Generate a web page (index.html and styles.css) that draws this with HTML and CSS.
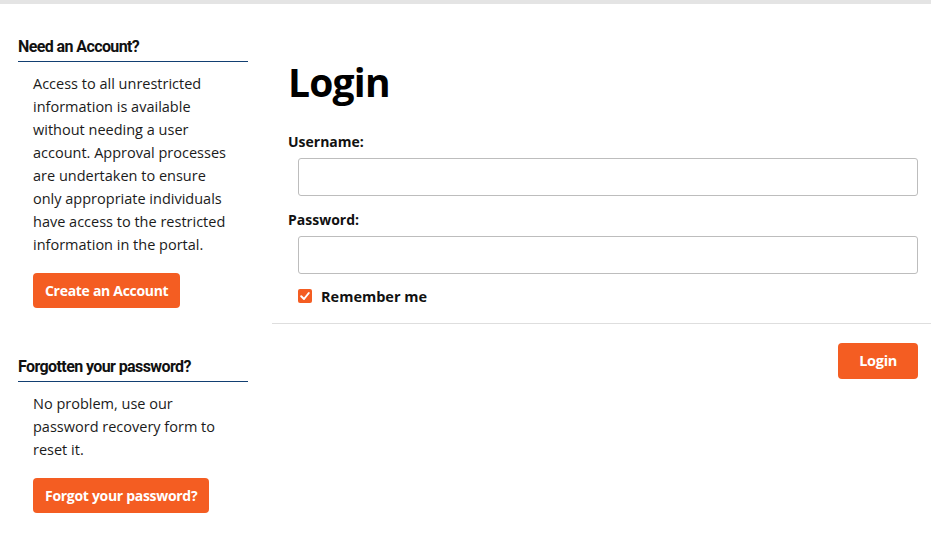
FILE: index.html
```html
<!DOCTYPE html>
<html lang="en">
<head>
<meta charset="utf-8">
<title>Login</title>
<link rel="stylesheet" href="styles.css">
</head>
<body>
<div class="topbar"></div>
<div class="page">
  <aside class="sidebar">
    <section class="panel">
      <h2 class="panel-title">Need an Account?</h2>
      <p class="panel-text">Access to all unrestricted information is available without needing a user account. Approval processes are undertaken to ensure only appropriate individuals have access to the restricted information in the portal.</p>
      <a class="btn btn-side" href="#">Create an Account</a>
    </section>
    <section class="panel">
      <h2 class="panel-title">Forgotten your password?</h2>
      <p class="panel-text">No problem, use our password recovery form to reset it.</p>
      <a class="btn btn-side" href="#">Forgot your password?</a>
    </section>
  </aside>
  <main class="main">
    <form class="login-form">
      <div class="form-body">
        <h1 class="title">Login</h1>
        <label class="field-label" for="username">Username:</label>
        <input class="field-input" id="username" type="text">
        <label class="field-label" for="password">Password:</label>
        <input class="field-input" id="password" type="password">
        <label class="remember">
          <span class="check"><svg viewBox="0 0 14 14" width="14" height="14"><path d="M3.2 7.2 L6 10 L10.8 4" fill="none" stroke="#fff" stroke-width="2" stroke-linecap="round" stroke-linejoin="round"/></svg></span>
          Remember me
        </label>
      </div>
      <div class="form-footer">
        <button class="btn btn-login" type="button">Login</button>
      </div>
    </form>
  </main>
</div>
</body>
</html>
```
FILE: styles.css
```css
* { box-sizing: border-box; }
html, body { margin: 0; padding: 0; background: #fff; }
body {
  font-family: "Open Sans", "Noto Sans", sans-serif;
  color: #1b1b1b;
  font-size: 14px;
}
.topbar {
  height: 4px;
  background: #e4e4e4;
}
.page {
  display: flex;
  padding-left: 18px;
}
.sidebar {
  width: 230px;
  flex: none;
  padding-top: 33px;
}
.panel { margin-bottom: 49px; }
.panel:last-child { margin-bottom: 0; }
.panel-title {
  margin: 0;
  font-family: "Roboto", sans-serif;
  font-weight: 700;
  font-size: 16px;
  letter-spacing: -0.6px;
  color: #111;
  line-height: 20px;
  padding-bottom: 4px;
  border-bottom: 1px solid #123f72;
}
.panel-text {
  margin: 10px 0 17px 15px;
  width: 200px;
  font-size: 14.5px;
  line-height: 23px;
}
.btn {
  display: inline-block;
  background: #f45d22;
  color: #fff;
  font-family: "Open Sans", sans-serif;
  font-weight: 700;
  font-size: 14px;
  letter-spacing: -0.3px;
  text-decoration: none;
  border: none;
  border-radius: 4px;
  height: 35px;
  line-height: 35px;
  padding: 0 12px;
}
.btn-side { margin-left: 15px; }
.main {
  flex: 1;
  margin-left: 24px;
}
.form-body {
  padding: 56px 13px 17px 16px;
  border-bottom: 1px solid #dedede;
}
.title {
  margin: 0 0 29px;
  font-family: "Open Sans", sans-serif;
  font-size: 39px;
  font-weight: 700;
  line-height: 44px;
  color: #000;
  letter-spacing: -0.8px;
}
.field-label {
  display: block;
  font-weight: 700;
  font-size: 14px;
  line-height: 18px;
  color: #111;
  margin-bottom: 7px;
}
.field-input {
  display: block;
  width: calc(100% - 10px);
  margin-left: 10px;
  height: 38px;
  border: 1px solid #bdbdbd;
  border-radius: 3px;
  margin-bottom: 15px;
  font: inherit;
  padding: 0 8px;
}
#password { margin-bottom: 12px; }
.remember {
  display: flex;
  align-items: center;
  gap: 9px;
  height: 20px;
  margin-left: 10px;
  font-weight: 700;
  font-size: 14.5px;
  color: #111;
}
.check {
  width: 14px;
  height: 14px;
  border-radius: 2px;
  background: #f45d22;
  display: inline-flex;
}
.form-footer {
  display: flex;
  justify-content: flex-end;
  padding: 19px 13px 0 0;
}
.btn-login {
  padding: 0 21px;
  height: 36px;
  line-height: 36px;
  font-size: 14.5px;
}
```
